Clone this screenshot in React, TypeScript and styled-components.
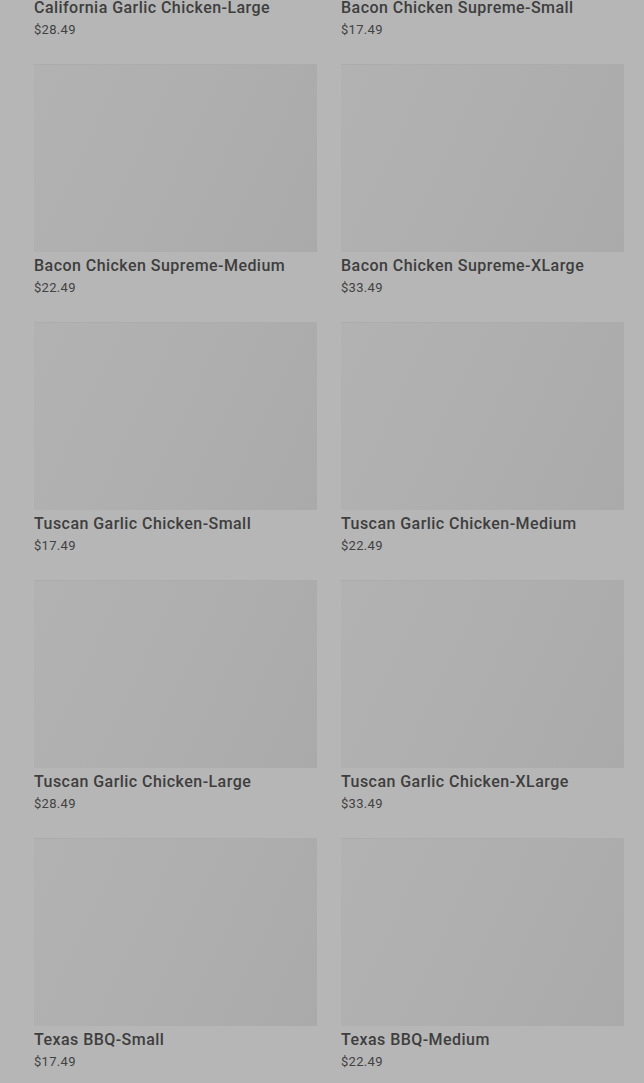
import styled, { createGlobalStyle } from "styled-components";

const GlobalStyle = createGlobalStyle`
  html, body {
    margin: 0;
    padding: 0;
    background: #b6b6b6;
    overflow: hidden;
    height: 1083px;
  }
`;

const Page = styled.div`
  width: 644px;
  height: 1083px;
  overflow: hidden;
  background: #b6b6b6;
  font-family: Roboto, "Liberation Sans", sans-serif;
`;

const ProductsGrid = styled.div`
  margin-top: -194px;
  padding: 0 20px 0 34px;
  display: grid;
  grid-template-columns: 283px 283px;
  column-gap: 24px;
  row-gap: 22px;
`;

const Card = styled.div`
  display: flex;
  flex-direction: column;
`;

const Thumb = styled.div`
  height: 188px;
  background: linear-gradient(115deg, #b2b2b2 0%, #afafaf 45%, #aaaaaa 100%);
  border-top: 1px solid #acacac;
  box-sizing: border-box;
`;

const Name = styled.div`
  margin-top: 4px;
  font-size: 16px;
  font-weight: 500;
  letter-spacing: 0.45px;
  line-height: 20px;
  color: #3e3e3e;
  white-space: nowrap;
`;

const Price = styled.div`
  font-size: 13px;
  letter-spacing: 0.3px;
  line-height: 24px;
  color: #424242;
`;

interface Product {
  name: string;
  price: number;
}

const products: Product[] = [
  { name: "California Garlic Chicken-Large", price: 28.49 },
  { name: "Bacon Chicken Supreme-Small", price: 17.49 },
  { name: "Bacon Chicken Supreme-Medium", price: 22.49 },
  { name: "Bacon Chicken Supreme-XLarge", price: 33.49 },
  { name: "Tuscan Garlic Chicken-Small", price: 17.49 },
  { name: "Tuscan Garlic Chicken-Medium", price: 22.49 },
  { name: "Tuscan Garlic Chicken-Large", price: 28.49 },
  { name: "Tuscan Garlic Chicken-XLarge", price: 33.49 },
  { name: "Texas BBQ-Small", price: 17.49 },
  { name: "Texas BBQ-Medium", price: 22.49 },
];

function ProductCard({ name, price }: Product) {
  return (
    <Card>
      <Thumb />
      <Name>{name}</Name>
      <Price>${price.toFixed(2)}</Price>
    </Card>
  );
}

export default function App() {
  return (
    <Page>
      <GlobalStyle />
      <ProductsGrid>
        {products.map((p) => (
          <ProductCard key={p.name} name={p.name} price={p.price} />
        ))}
      </ProductsGrid>
    </Page>
  );
}
